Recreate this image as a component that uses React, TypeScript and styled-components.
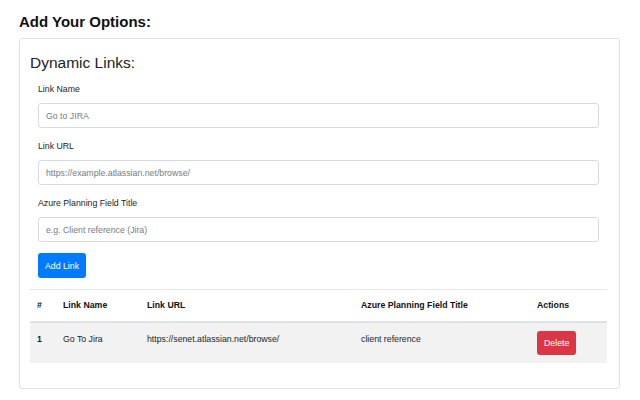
import React from 'react';
import styled, { createGlobalStyle } from 'styled-components';

const GlobalStyle = createGlobalStyle`
  html, body {
    margin: 0;
    padding: 0;
    background: #ffffff;
  }
  body {
    font-family: "Liberation Sans", Arial, sans-serif;
    color: #212529;
  }
  * {
    box-sizing: border-box;
  }
`;

const Page = styled.div`
  padding: 11px 20px 0 19px;
  width: 640px;
`;

const Title = styled.h2`
  margin: 0 0 5px;
  font-size: 15px;
  line-height: 22px;
  font-weight: 700;
  color: #111;
`;

const Card = styled.div`
  width: 601px;
  height: 351px;
  border: 1px solid #e2e2e2;
  border-radius: 3px;
  padding: 13px 12px 0 10px;
`;

const CardTitle = styled.h3`
  margin: 0 0 9px;
  font-size: 15.5px;
  line-height: 22px;
  font-weight: 400;
  color: #222;
`;

const Form = styled.form`
  padding: 0 8px;
  display: flex;
  flex-direction: column;
  align-items: flex-start;
`;

const Field = styled.div`
  width: 100%;
  margin-bottom: 12px;
`;

const Label = styled.label`
  display: block;
  font-size: 8.75px;
  line-height: 13px;
  margin-bottom: 7px;
  color: #1d1d1d;
`;

const Input = styled.input`
  display: block;
  width: 100%;
  height: 25px;
  padding: 0 7px;
  border: 1px solid #d6dadd;
  border-radius: 3px;
  font-family: inherit;
  font-size: 8.75px;
  color: #495057;
  background: #fff;

  &::placeholder {
    color: #757b82;
  }
`;

const Button = styled.button<{ $variant?: 'primary' | 'danger' }>`
  height: ${p => (p.$variant === 'danger' ? '24px' : '25px')};
  padding: 0 ${p => (p.$variant === 'danger' ? '7px' : '6px')};
  border: none;
  border-radius: 3px;
  font-family: inherit;
  font-size: 8.75px;
  color: #fff;
  background: ${p => (p.$variant === 'danger' ? '#dc3545' : '#007bff')};
  cursor: pointer;
`;

const AddButton = styled(Button)`
  margin-top: -1px;
  width: 48px;
`;

const Table = styled.table`
  width: 577px;
  margin-top: 11px;
  border-collapse: collapse;
  table-layout: fixed;
  font-size: 8.75px;
`;

const HeadCell = styled.th<{ $w?: number }>`
  ${p => (p.$w ? `width: ${p.$w}px;` : '')}
  text-align: left;
  font-weight: 700;
  line-height: 17px;
  padding: 7px 7px;
  border-top: 1px solid #e6e8ea;
  border-bottom: 2px solid #dee2e6;
  color: #111;
`;

const Row = styled.tr`
  background: #f2f2f2;
`;

const Cell = styled.td<{ $bold?: boolean }>`
  vertical-align: top;
  line-height: 17px;
  padding: 8px 7px;
  font-weight: ${p => (p.$bold ? 700 : 400)};
  color: #212529;
`;

const links = [
  {
    name: 'Go To Jira',
    url: 'https://senet.atlassian.net/browse/',
    field: 'client reference',
  },
];

const App: React.FC = () => {
  return (
    <>
      <GlobalStyle />
      <Page>
        <Title>Add Your Options:</Title>
        <Card>
          <CardTitle>Dynamic Links:</CardTitle>
          <Form onSubmit={e => e.preventDefault()}>
            <Field>
              <Label>Link Name</Label>
              <Input placeholder="Go to JIRA" />
            </Field>
            <Field>
              <Label>Link URL</Label>
              <Input placeholder="https://example.atlassian.net/browse/" />
            </Field>
            <Field>
              <Label>Azure Planning Field Title</Label>
              <Input placeholder="e.g. Client reference (Jira)" />
            </Field>
            <AddButton type="submit">Add Link</AddButton>
          </Form>
          <Table>
            <thead>
              <tr>
                <HeadCell $w={26}>#</HeadCell>
                <HeadCell $w={84}>Link Name</HeadCell>
                <HeadCell $w={214}>Link URL</HeadCell>
                <HeadCell $w={176}>Azure Planning Field Title</HeadCell>
                <HeadCell>Actions</HeadCell>
              </tr>
            </thead>
            <tbody>
              {links.map((link, i) => (
                <Row key={link.url}>
                  <Cell $bold>{i + 1}</Cell>
                  <Cell>{link.name}</Cell>
                  <Cell>{link.url}</Cell>
                  <Cell>{link.field}</Cell>
                  <Cell>
                    <Button $variant="danger">Delete</Button>
                  </Cell>
                </Row>
              ))}
            </tbody>
          </Table>
        </Card>
      </Page>
    </>
  );
};

export default App;
